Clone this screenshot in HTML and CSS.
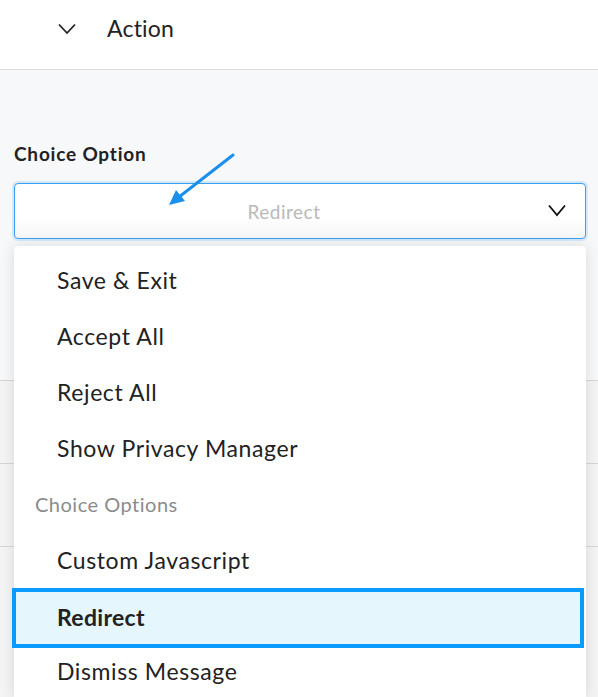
FILE: index.html
```html
<!DOCTYPE html>
<html lang="en">
<head>
<meta charset="UTF-8" />
<meta name="viewport" content="width=device-width, initial-scale=1" />
<title>Choice Option</title>
<link rel="stylesheet" href="styles.css">
</head>
<body>

<div class="header">
  <svg class="chev" width="18" height="12" viewBox="0 0 18 12"><path d="M1 1.5 L9 10 L17 1.5" fill="none" stroke="#222" stroke-width="1.8"/></svg>
  <span class="header-title">Action</span>
</div>

<div class="panel">
  <div class="label">Choice Option</div>
  <div class="field">
    <div class="select">
      <span class="select-value">Redirect</span>
      <svg class="select-chev" width="18" height="13" viewBox="0 0 18 13"><path d="M1 1.5 L9 11 L17 1.5" fill="none" stroke="#111" stroke-width="1.8"/></svg>
    </div>
    <svg class="pointer" width="70" height="56" viewBox="0 0 70 56">
      <line x1="66" y1="2" x2="12" y2="44" stroke="#1a90ec" stroke-width="3" stroke-linecap="round"/>
      <polygon points="2,52 9,37 18,48" fill="#1a90ec"/>
    </svg>
    <ul class="menu">
      <li class="item">Save &amp; Exit</li>
      <li class="item">Accept All</li>
      <li class="item">Reject All</li>
      <li class="item">Show Privacy Manager</li>
      <li class="group">Choice Options</li>
      <li class="item">Custom Javascript</li>
      <li class="item active">Redirect</li>
      <li class="item last">Dismiss Message</li>
    </ul>
  </div>
  <div class="rows">
    <div class="row"></div>
    <div class="row"></div>
    <div class="row last"></div>
  </div>
</div>

</body>
</html>
```

FILE: styles.css
```css
body {
  margin: 0;
  background: #f7f8fa;
  font-family: Lato, "Open Sans", sans-serif;
  color: #222;
}
.header {
  height: 69px;
  background: #fff;
  border-bottom: 1px solid #dedede;
  display: flex;
  align-items: center;
  padding-left: 58px;
  gap: 31px;
}
.chev {
  margin-top: -12px;
}
.header-title {
  font-size: 23px;
  letter-spacing: 0.2px;
  margin-top: -13px;
}
.panel {
  padding: 72px 12px 0 14px;
}
.label {
  font-size: 19px;
  font-weight: bold;
  letter-spacing: 0.8px;
  height: 41px;
}
.field {
  position: relative;
}
.select {
  height: 54px;
  border: 1px solid #3a9ff0;
  border-radius: 4px;
  box-shadow: 0 0 0 2px #d3e8fb;
  background: linear-gradient(#fff 60%, #f6f6f6);
  display: flex;
  align-items: center;
  justify-content: center;
  padding-right: 32px;
  position: relative;
}
.select-value {
  color: #b9b9b9;
  font-size: 19px;
  letter-spacing: 0.5px;
}
.select-chev {
  position: absolute;
  right: 19px;
  top: 20px;
}
.pointer {
  position: absolute;
  left: 153px;
  top: -30px;
}
.menu {
  position: absolute;
  top: 63px;
  left: 0;
  right: 0;
  margin: 0;
  padding: 6px 0 0;
  list-style: none;
  background: #fff;
  border-radius: 4px 4px 0 0;
  box-shadow: 0 0 14px rgba(0, 0, 0, 0.12);
  height: 445px;
  z-index: 10;
}
.item, .group {
  height: 56px;
  display: flex;
  align-items: center;
  font-size: 23px;
  letter-spacing: 0.6px;
  padding-left: 43px;
  color: #222;
}
.item.last {
  height: 53px;
  padding-bottom: 3px;
}
.group {
  font-size: 20px;
  letter-spacing: 0.5px;
  color: #8b8b8b;
  padding-left: 21px;
}
.item.active {
  height: 49px;
  padding-bottom: 3px;
  margin: 0 2px -4px -2px;
  padding-left: 41px;
  border: 4px solid #0a9bff;
  background: #e6f6fd;
  font-weight: bold;
  letter-spacing: 0.3px;
  position: relative;
}
.rows {
  margin: 141px -12px 0 -14px;
}
.row {
  height: 82px;
  border-top: 1px solid #d6d6d6;
  background: #f4f4f4;
}
.row.last {
  height: 151px;
}
```
